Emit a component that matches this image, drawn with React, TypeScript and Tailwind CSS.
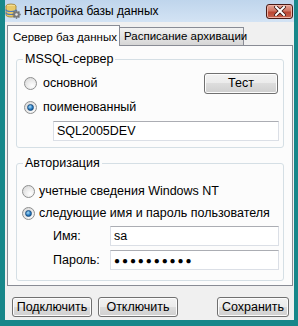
import React from 'react';

const font = "font-['Liberation_Sans',Arial,sans-serif]";

function Radio({ checked }: { checked?: boolean }) {
  return (
    <span className="flex h-[13px] w-[13px] shrink-0 items-center justify-center rounded-full border border-[#8e8f8f] bg-[radial-gradient(circle_at_65%_70%,#ffffff,#d4d4d4)]">
      {checked && (
        <span className="h-[7px] w-[7px] rounded-full border border-[#1d4f80] bg-[radial-gradient(circle_at_40%_35%,#a8dcf8,#1f74bd_60%,#0c3d6c)]" />
      )}
    </span>
  );
}

function WinButton({ children, className }: { children: React.ReactNode; className: string }) {
  return (
    <button
      type="button"
      className={`flex items-center justify-center whitespace-nowrap rounded-[3px] border border-[#707070] bg-[linear-gradient(#f2f2f2,#ebebeb_50%,#dddddd_50%,#cfcfcf)] text-[12.5px] text-black shadow-[inset_0_0_0_1px_#fcfcfc] ${className}`}
    >
      {children}
    </button>
  );
}

function TextBox({ children, className }: { children?: React.ReactNode; className: string }) {
  return (
    <div
      className={`flex h-[20px] items-center border border-[#dbdfe6] border-t-[#abadb3] bg-white pl-[3px] text-[12.5px] text-black ${className}`}
    >
      {children}
    </div>
  );
}

function DbIcon() {
  return (
    <svg width="16" height="16" viewBox="0 0 16 16">
      <ellipse cx="6" cy="3" rx="5" ry="2" fill="#f3dc8e" stroke="#9a7a2a" strokeWidth="0.8" />
      <path d="M1 3v9c0 1.1 2.2 2 5 2s5-.9 5-2V3" fill="#e8c868" stroke="#9a7a2a" strokeWidth="0.8" />
      <path d="M1 6.5c0 1.1 2.2 2 5 2s5-.9 5-2" fill="none" stroke="#4a7bc0" strokeWidth="1.2" />
      <path d="M1 9.5c0 1.1 2.2 2 5 2s5-.9 5-2" fill="none" stroke="#4a7bc0" strokeWidth="1.2" />
      <circle cx="11.5" cy="11.5" r="3.3" fill="#7a7a7a" />
      <path
        d="M11.5 7.3v1.2M11.5 14.5v1.2M7.3 11.5h1.2M14.5 11.5h1.2M8.6 8.6l.9.9M13.5 13.5l.9.9M8.6 14.4l.9-.9M13.5 9.5l.9-.9"
        stroke="#6a6a6a"
        strokeWidth="1.4"
      />
      <circle cx="11.5" cy="11.5" r="1.3" fill="#e8e8e8" />
    </svg>
  );
}

function CloseButton() {
  return (
    <div className="flex h-[15px] w-[27px] items-center justify-center rounded-[3px] border border-[#4a1a16] bg-[linear-gradient(#e6a596,#cf7462_45%,#bb4633_55%,#c6644f)] shadow-[inset_0_0_0_1px_#eeb3a6]">
      <svg width="12" height="10" viewBox="0 0 12 10">
        <path d="M2 1l8 8M10 1L2 9" stroke="#3a1410" strokeWidth="3.6" strokeLinecap="square" />
        <path d="M2 1l8 8M10 1L2 9" stroke="#ffffff" strokeWidth="2" strokeLinecap="square" />
      </svg>
    </div>
  );
}

export default function App() {
  return (
    <div className={`flex h-[326px] w-[298px] bg-[#17878a] pb-[6px] pl-[5px] pr-[4px] text-[12.5px] ${font}`}>
      <div className="flex w-[289px] flex-col">
        {/* Title bar */}
        <div className="flex h-[22px] items-center bg-[linear-gradient(#bfd5ec,#d3e3f4)] pr-[1px]">
          <DbIcon />
          <span className="ml-[3px] whitespace-nowrap text-[12px] text-black">Настройка базы данных</span>
          <div className="ml-auto">
            <CloseButton />
          </div>
        </div>

        {/* Client area */}
        <div className="flex flex-1 flex-col bg-[#f0f0f0] pl-[2px] pt-[3px]">
          {/* Tabs */}
          <div className="flex h-[20px] items-end text-[11.5px]">
            <div className="relative z-10 -mb-px flex h-[21px] w-[113px] items-start whitespace-nowrap border border-b-0 border-[#898c95] bg-[#fcfcfc] pl-[5px] pt-[3px] text-black">
              Сервер баз данных
            </div>
            <div className="flex h-[18px] w-[124px] items-center whitespace-nowrap border border-b-0 border-l-0 border-[#898c95] bg-[linear-gradient(#f2f2f2,#e4e4e4_50%,#d6d6d6)] pl-[4px] text-black">
              Расписание архивации
            </div>
          </div>

          {/* Panel */}
          <div className="flex h-[241px] w-[286px] flex-col border border-[#898c95] bg-[#fcfcfc] px-[8px] pb-[4px] pt-[13px]">
            {/* MSSQL group */}
            <div className="relative flex h-[89px] flex-col rounded-[3px] border border-[#d5dfe5] pb-[6px] pt-[13px]">
              <span className="absolute -top-[8px] left-[6px] whitespace-nowrap bg-[#fcfcfc] px-[2px] leading-[15px] text-black">
                MSSQL-сервер
              </span>
              <div className="flex h-[20px] items-center pl-[7px] pr-[5px]">
                <Radio />
                <span className="ml-[6px] text-black">основной</span>
                <WinButton className="ml-auto h-[21px] w-[74px]">Тест</WinButton>
              </div>
              <div className="mt-[4px] flex h-[20px] items-center pl-[7px]">
                <Radio checked />
                <span className="ml-[6px] text-black">поименованный</span>
              </div>
              <TextBox className="ml-[36px] mt-[4px] w-[226px]">SQL2005DEV</TextBox>
            </div>

            {/* Authorization group */}
            <div className="relative mt-[15px] flex h-[118px] flex-col rounded-[3px] border border-[#d5dfe5] pb-[10px] pt-[17px]">
              <span className="absolute -top-[8px] left-[6px] whitespace-nowrap bg-[#fcfcfc] px-[2px] leading-[15px] text-black">
                Авторизация
              </span>
              <div className="flex h-[20px] items-center pl-[5px]">
                <Radio />
                <span className="ml-[4px] whitespace-nowrap text-black">учетные сведения Windows NT</span>
              </div>
              <div className="mt-[2px] flex h-[20px] items-center pl-[5px]">
                <Radio checked />
                <span className="ml-[4px] whitespace-nowrap text-black">следующие имя и пароль пользователя</span>
              </div>
              <div className="mt-[3px] flex items-center">
                <span className="w-[93px] pl-[36px] text-black">Имя:</span>
                <TextBox className="w-[169px]">sa</TextBox>
              </div>
              <div className="mt-[4px] flex items-center">
                <span className="w-[93px] pl-[36px] text-black">Пароль:</span>
                <TextBox className="w-[169px]">
                  <span className="text-[10px] tracking-[1.9px]">●●●●●●●●●●</span>
                </TextBox>
              </div>
            </div>
          </div>

          {/* Bottom buttons */}
          <div className="mt-[11px] flex pl-[5px] pr-[5px]">
            <WinButton className="h-[20px] w-[80px]">Подключить</WinButton>
            <WinButton className="ml-[6px] h-[20px] w-[80px]">Отключить</WinButton>
            <WinButton className="ml-auto h-[20px] w-[72px]">Сохранить</WinButton>
          </div>
        </div>
      </div>
    </div>
  );
}
